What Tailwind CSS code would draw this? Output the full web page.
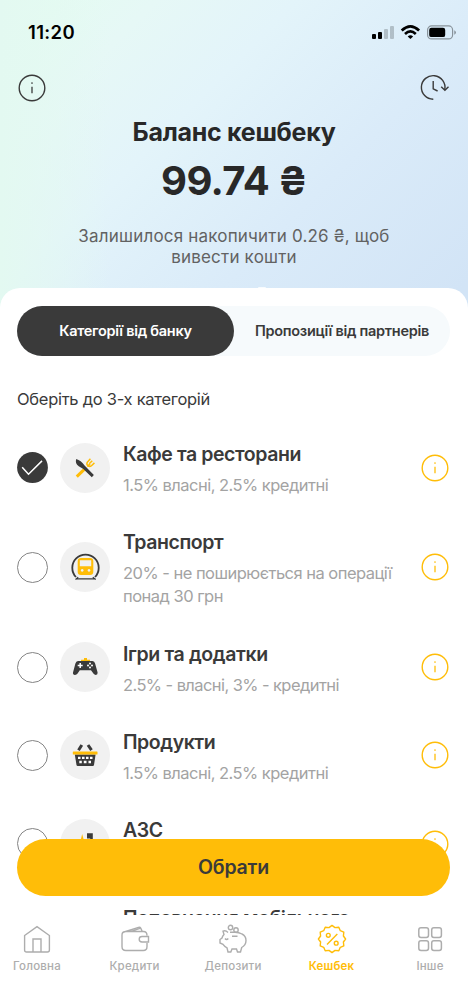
<!DOCTYPE html>
<html lang="uk">
<head>
<meta charset="utf-8">
<meta name="viewport" content="width=device-width, initial-scale=1">
<title>Кешбек</title>
<script src="https://cdn.jsdelivr.net/npm/@tailwindcss/browser@4"></script>
</head>
<body class="bg-white">
<svg class="hidden">
  <symbol id="info" viewBox="0 0 28 28"><circle cx="14" cy="14" r="12.8" fill="none" stroke="currentColor" stroke-width="1.4"/><path d="M14 12.8v6.4" fill="none" stroke="currentColor" stroke-width="1.3"/><circle cx="14" cy="9" r=".85" fill="currentColor"/></symbol>
</svg>
<div class="relative flex h-[992px] w-[468px] flex-col overflow-hidden bg-[linear-gradient(90deg,#e3f9f1_0px,#e3f9f100_110px),linear-gradient(135deg,#e4fdf0_0px,#e6f8f6_110px,#e3f4fa_210px,#daebf9_360px,#d2e4f6_530px)] font-['Inter','Noto_Sans',sans-serif] text-[#3a3a3a]">
  <header class="flex h-[288px] shrink-0 flex-col">
    <div class="flex h-[64px] items-center justify-between pl-[28px] pr-[12px] text-black">
      <span class="text-[18.5px] font-semibold leading-6 tracking-[0.35px]">11:20</span>
      <svg class="h-[16px] w-[84px]" viewBox="0 0 84 16">
        <rect y="10" width="4" height="5" rx="1"/><rect x="6" y="8" width="4" height="7" rx="1"/><rect x="12" y="5" width="4" height="10" rx="1" opacity=".2"/><rect x="18" y="2" width="4" height="13" rx="1" opacity=".2"/>
        <g fill="none" stroke="#000" stroke-width="2.7"><path d="M29.7 6.5Q38.4 -1.8 47.1 6.5"/><path d="M33 9.9Q38.4 5 43.8 9.9"/></g><path d="M35.7 12.4Q38.4 10.3 41.1 12.4L38.4 15Z"/>
        <rect x="55.6" y="1.9" width="25" height="13" rx="4" fill="none" stroke="#000" stroke-opacity=".38" stroke-width="1.2"/><rect x="57.2" y="3.8" width="16" height="9.3" rx="2.2"/><path d="M82.3 6.2v4.6q1.6-.9 1.6-2.3t-1.6-2.3" opacity=".4"/>
      </svg>
    </div>
    <div class="flex h-[48px] items-center justify-between pl-[18px] pr-[18px]">
      <svg class="h-7 w-7"><use href="#info"/></svg>
      <svg class="h-7 w-[30px]" viewBox="0 0 30 28" fill="none" stroke="#3a3a3a" stroke-width="1.4"><path d="M13.3 25.2A11.8 11.8 0 1 1 24.800 15.500"/><path d="M21.2 12.800l3.700 3.500 3.600-3.500M13.200 7v7.800l4.400 2.200"/></svg>
    </div>
    <h1 class="mt-[4px] text-center text-[25px] font-bold leading-[32px] tracking-[-0.28px] text-[#282828]">Баланс кешбеку</h1>
    <p class="mt-[9px] text-center text-[40px] font-bold leading-[48px] tracking-[-0.6px] text-[#282828]">99.74 ₴</p>
    <p class="mt-[21px] text-center text-[17px] leading-[21px] tracking-[0.19px] text-[#626262]">Залишилося накопичити 0.26 ₴, щоб<br>вивести кошти</p>
    <span class="ml-[258px] mt-auto h-[1px] w-[8px] rounded-t-full bg-white/80"></span>
  </header>
  <main class="relative h-[627px] shrink-0 overflow-hidden rounded-t-[20px] bg-white px-[17px] pt-[18px]">
    <div class="flex h-[50px] w-[433px] rounded-full bg-[#f6fafc] text-[14.5px] font-semibold tracking-[-0.29px]">
      <div class="flex w-[217px] items-center justify-center rounded-full bg-[#3a3a3a] text-white">Категорії від банку</div>
      <div class="flex flex-1 items-center justify-center">Пропозиції від партнерів</div>
    </div>
    <h2 class="mt-[31px] text-[16.5px] leading-6 tracking-[-0.28px]">Оберіть до 3-х категорій</h2>
    <ul class="mt-[28px] flex w-[433px] flex-col gap-[31.3px]">
      <li class="flex shrink-0 items-center">
        <svg class="h-[31px] w-[31px] shrink-0" viewBox="0 0 31 31"><circle cx="15.5" cy="15.5" r="15.4" fill="#3a3a3a"/><path d="M5.2 15.2l6.3 7L25 8.9" fill="none" stroke="#fff" stroke-width="1.5"/></svg>
        <div class="ml-[12px] flex h-[50px] w-[50px] shrink-0 items-center justify-center rounded-full bg-[#f1f1f1]">
          <svg class="h-[28px] w-[28px]" viewBox="0 0 30 30"><path d="M6.2 24.3L14.8 16" stroke="#ffbd08" stroke-width="3.2"/><path d="M17.5 13.5l3-3M20.8 5.2l-3.3 3.5q-1.2 2.2.5 3.7t3.7.4l3.4-3.3M22.8 7.2l-3.3 3.3" fill="none" stroke="#ffbd08" stroke-width="1.6"/><path d="M5.6 5.4Q4 10 8.3 13.2L13.2 16l9.1 8.8 2.2-2.2L14.8 12.5Q10.5 6.8 5.6 5.4Z" fill="#3a3a3a"/></svg>
        </div>
        <div class="-mb-px ml-[13px] w-[297.5px] shrink-0"><h3 class="text-[19.5px] font-semibold leading-[30px] tracking-[-0.43px]">Кафе та ресторани</h3><p class="mt-[5px] text-[16.5px] leading-[23px] tracking-[-0.52px] text-[#a3a3a3]">1.5% власні, 2.5% кредитні</p></div>
        <svg class="h-7 w-7 shrink-0 text-[#ffbd08]"><use href="#info"/></svg>
      </li>
      <li class="flex shrink-0 items-center">
        <span class="h-[31px] w-[31px] shrink-0 rounded-full border border-[#848484]"></span>
        <div class="ml-[12px] flex h-[50px] w-[50px] shrink-0 items-center justify-center rounded-full bg-[#f1f1f1]">
          <svg class="h-[30px] w-[30px]" viewBox="0 0 30 30"><path d="M6 25A13.2 13.2 0 1 1 25 25" fill="none" stroke="#3a3a3a" stroke-width="1.8"/><path fill="#ffbd08" fill-rule="evenodd" d="M11 6h9q3.3 0 3.3 3.3v10.4q0 3.3-3.3 3.3h-9q-3.3 0-3.3-3.3V9.300Q7.700 6 11 6ZM9.800 8.200v6h11.400v-6ZM12.200 17a1.400 1.400 0 1 0 .01 0ZM19 17a1.400 1.400 0 1 0 .01 0Z"/><path d="M5.500 27.500L8.200 25.300M22.800 25.300L25.700 27.500M6 26.900H25" fill="none" stroke="#3a3a3a" stroke-width="1.200"/></svg>
        </div>
        <div class="-mb-px ml-[13px] w-[297.5px] shrink-0"><h3 class="text-[19.5px] font-semibold leading-[30px] tracking-[-0.43px]">Транспорт</h3><p class="mt-[5px] text-[16.5px] leading-[23px] tracking-[-0.52px] text-[#a3a3a3]">20% - не поширюється на операції<br>понад 30 грн</p></div>
        <svg class="h-7 w-7 shrink-0 text-[#ffbd08]"><use href="#info"/></svg>
      </li>
      <li class="flex shrink-0 items-center">
        <span class="h-[31px] w-[31px] shrink-0 rounded-full border border-[#848484]"></span>
        <div class="ml-[12px] flex h-[50px] w-[50px] shrink-0 items-center justify-center rounded-full bg-[#f1f1f1]">
          <svg class="h-[30px] w-[30px]" viewBox="0 0 30 30"><path d="M11 9V7.700h3V6.100h3v1.600h3V9Z" fill="#ffbd08"/><path d="M8 9h14.500q2 0 2.600 2.500l2.500 9q.3 2.400-1.800 2.500-1.400-.1-2.200-1.200L21 18.300H9.800L7.400 21.800Q6.600 22.900 5 23 2.600 22.900 3 20.500L5.400 11.500Q6 9 8 9Z" fill="#3a3a3a"/><path d="M7.700 13.500h5M10.200 11v5" stroke="#fff" stroke-width="1.500"/><g fill="#fff"><circle cx="20" cy="11.600" r="1"/><circle cx="20" cy="15.400" r="1"/><circle cx="18" cy="13.500" r="1"/><circle cx="22" cy="13.500" r="1"/></g></svg>
        </div>
        <div class="-mb-px ml-[13px] w-[297.5px] shrink-0"><h3 class="text-[19.5px] font-semibold leading-[30px] tracking-[-0.38px]">Ігри та додатки</h3><p class="mt-[5px] text-[16.5px] leading-[23px] tracking-[-0.58px] text-[#a3a3a3]">2.5% - власні, 3% - кредитні</p></div>
        <svg class="h-7 w-7 shrink-0 text-[#ffbd08]"><use href="#info"/></svg>
      </li>
      <li class="flex shrink-0 items-center">
        <span class="h-[31px] w-[31px] shrink-0 rounded-full border border-[#848484]"></span>
        <div class="ml-[12px] flex h-[50px] w-[50px] shrink-0 items-center justify-center rounded-full bg-[#f1f1f1]">
          <svg class="h-[30px] w-[30px]" viewBox="0 0 30 30"><path d="M8.500 10.200l3.300-5.200M21.500 10.200L18 5" stroke="#3a3a3a" stroke-width="3"/><path d="M4.800 14.500h20.800L24 25q-.2 1-1.200 1H7.700q-1 0-1.200-1Z" fill="#3a3a3a"/><rect x="2.800" y="11.500" width="24.700" height="3" rx=".5" fill="#ffbd08"/><g fill="#fff"><path d="M8 16.800h2.500v2.200H8ZM12 16.800h2.500v2.200H12ZM16 16.800h2.500v2.200H16ZM20 16.800h2.500v2.200H20ZM9.300 20.700h2.500v2.600H9.300ZM13.800 20.700h2.700v2.600h-2.700ZM18.500 20.700h2.500v2.600h-2.500Z"/></g></svg>
        </div>
        <div class="-mb-px ml-[13px] w-[297.5px] shrink-0"><h3 class="text-[19.5px] font-semibold leading-[30px] tracking-[-0.43px]">Продукти</h3><p class="mt-[5px] text-[16.5px] leading-[23px] tracking-[-0.52px] text-[#a3a3a3]">1.5% власні, 2.5% кредитні</p></div>
        <svg class="h-7 w-7 shrink-0 text-[#ffbd08]"><use href="#info"/></svg>
      </li>
      <li class="flex h-[57px] shrink-0 items-center">
        <span class="h-[31px] w-[31px] shrink-0 rounded-full border border-[#848484]"></span>
        <div class="ml-[12px] flex h-[50px] w-[50px] shrink-0 items-center justify-center rounded-full bg-[#f1f1f1]">
          <svg class="h-[30px] w-[30px]" viewBox="0 0 30 30"><path d="M12.200 5l1.800 7h-3.600Z" fill="#ffbd08"/><path d="M17 4.200h5.800V14h-2.600V9.500H17Z" fill="#3a3a3a"/></svg>
        </div>
        <div class="ml-[13px] h-[57px] w-[297.5px] shrink-0"><h3 class="text-[19.5px] font-semibold leading-[30px] tracking-[-0.43px]">АЗС</h3></div>
        <svg class="h-7 w-7 shrink-0 text-[#ffbd08]"><use href="#info"/></svg>
      </li>
      <li class="shrink-0 pl-[106px]"><h3 class="text-[19.5px] font-semibold leading-[30px] tracking-[-0.43px]">Поповнення мобільного</h3></li>
    </ul>
  </main>
  <button class="absolute left-[17px] top-[839px] h-[57px] w-[433px] rounded-full bg-[#ffbd08] pt-px text-[19.5px] font-semibold tracking-[-0.2px]">Обрати</button>
  <nav class="flex h-[77px] shrink-0 justify-between bg-white text-[11.5px] font-medium tracking-[0.2px] text-[#adadad]">
    <a class="flex w-[74px] flex-col items-center pt-[9px]"><svg class="h-[30px] w-[30px]" viewBox="0 0 30 30" fill="none" stroke="currentColor" stroke-width="1.400"><path d="M2.600 11.500L15 2.600l12.400 8.900V26q0 2-2 2H4.600q-2 0-2-2ZM11 28V15h8v13"/></svg><span class="mt-[4px] leading-4">Головна</span></a>
    <a class="flex w-[121px] flex-col items-center pt-[9px]"><svg class="h-[30px] w-[30px]" viewBox="0 0 30 30" fill="none" stroke="currentColor" stroke-width="1.400"><path d="M27 11.500q0-4-3.500-4H6q-4 0-4 3.500v11.500q0 4 3.800 4h17.500q3.700 0 3.700-4V19M4 8L18.500 3.300q1.500-.5 2.200.8L22.300 7.500M11 7.300l9-3M28 12.500h-6q-2.800 0-2.800 2.700t2.800 2.800h6.500v-5.500Z"/></svg><span class="mt-[4px] leading-4">Кредити</span></a>
    <a class="flex w-[76px] flex-col items-center pt-[9px]"><svg class="h-[30px] w-[30px]" viewBox="0 0 30 30" fill="none" stroke="currentColor" stroke-width="1.400"><circle cx="12.500" cy="3.500" r="2.200"/><circle cx="18" cy="6" r="2.200"/><path d="M10 8.500Q7.500 6 5 7.200L6 10.500Q4.500 12 4 14L2 15.500v3.500l3 1.300q1.500 2.200 4 3.500L10 28h2.800l1.200-3h4.500l1 3h3l1.200-4.500q4.300-2.500 4.300-7T24 10q-3-1.700-7-1.700H12M14 12.300h5.500M7 14.500q1.500 2 3.300 0"/></svg><span class="mt-[4px] leading-4">Депозити</span></a>
    <a class="flex w-[121px] flex-col items-center pt-[9px] font-semibold text-[#ffbd08]"><svg class="h-[30px] w-[30px]" viewBox="0 0 30 30" fill="none" stroke="currentColor" stroke-width="1.400" stroke-linejoin="round"><path d="M15 1.400L18 3.600L21.800 3.200L23.300 6.700L26.800 8.200L26.400 12L28.600 15L26.400 18L26.800 21.800L23.300 23.300L21.800 26.800L18 26.400L15 28.600L12 26.400L8.200 26.800L6.700 23.300L3.200 21.800L3.600 18L1.400 15L3.600 12L3.200 8.200L6.700 6.700L8.200 3.200L12 3.600Z"/><path d="M20.300 10L10 20.500"/><circle cx="11.300" cy="11.300" r="1.900"/><circle cx="19.200" cy="19.200" r="1.900"/></svg><span class="mt-[4px] leading-4">Кешбек</span></a>
    <a class="flex w-[76px] flex-col items-center pt-[9px]"><svg class="h-[30px] w-[30px]" viewBox="0 0 30 30" fill="none" stroke="currentColor" stroke-width="1.500"><rect x="3.800" y="3.800" width="9.700" height="9.700" rx="2.200"/><rect x="16.700" y="3.800" width="9.700" height="9.700" rx="2.200"/><rect x="3.800" y="16.700" width="9.700" height="9.700" rx="2.200"/><rect x="16.700" y="16.700" width="9.700" height="9.700" rx="2.200"/></svg><span class="mt-[4px] leading-4">Інше</span></a>
  </nav>
</div>
</body>
</html>
